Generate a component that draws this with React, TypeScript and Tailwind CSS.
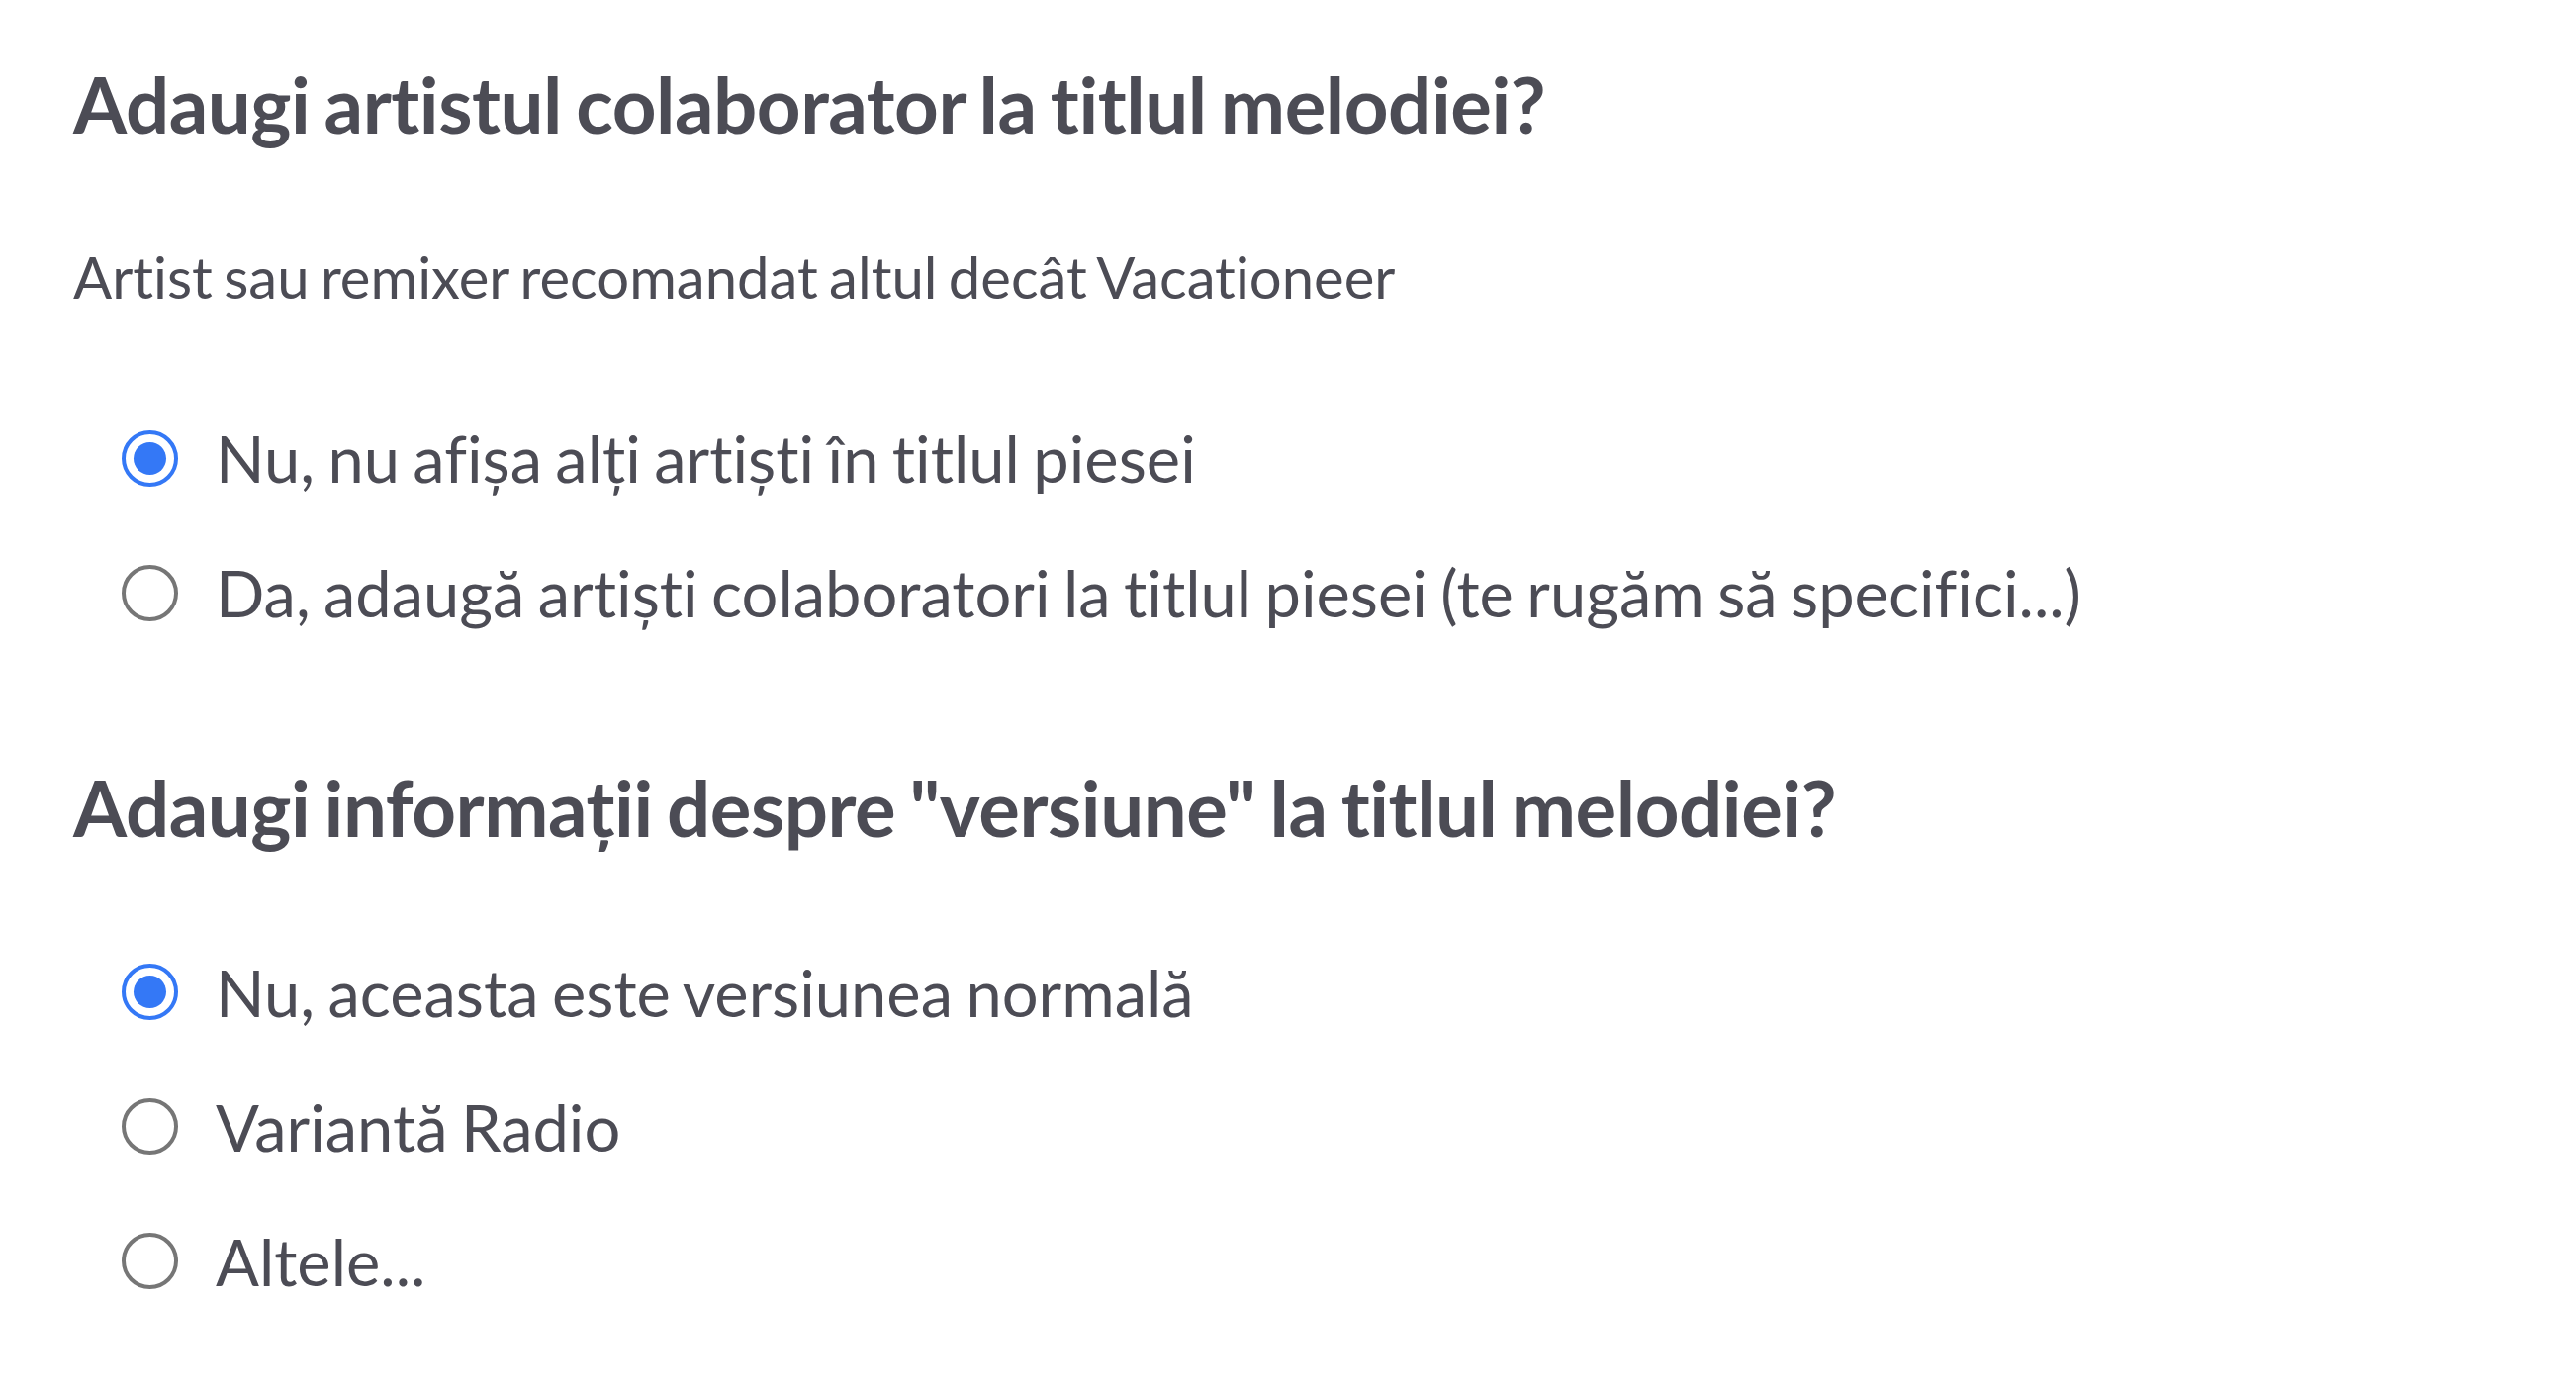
import { useState } from 'react';

interface Option {
    id: string;
    label: string;
}

const collabOptions: Option[] = [
    { id: 'no', label: 'Nu, nu afișa alți artiști în titlul piesei' },
    { id: 'yes', label: 'Da, adaugă artiști colaboratori la titlul piesei (te rugăm să specifici...)' },
];

const versionOptions: Option[] = [
    { id: 'normal', label: 'Nu, aceasta este versiunea normală' },
    { id: 'radio', label: 'Variantă Radio' },
    { id: 'other', label: 'Altele...' },
];

function Radio({ checked }: { checked: boolean }) {
    if (checked) {
        return (
            <span className="flex h-[57px] w-[57px] shrink-0 items-center justify-center rounded-full border-[4px] border-[#3478f6] bg-white">
                <span className="h-[33px] w-[33px] rounded-full bg-[#3478f6]" />
            </span>
        );
    }
    return <span className="h-[57px] w-[57px] shrink-0 rounded-full border-[4px] border-[#767676] bg-white" />;
}

function RadioGroup({
    options,
    value,
    onChange,
}: {
    options: Option[];
    value: string;
    onChange: (id: string) => void;
}) {
    return (
        <div className="flex flex-col gap-[58px] pl-[49px]">
            {options.map((opt) => (
                <label
                    key={opt.id}
                    onClick={() => onChange(opt.id)}
                    className="flex h-[78px] cursor-pointer items-center gap-[38px]"
                >
                    <Radio checked={value === opt.id} />
                    <span className="text-[65px] leading-[1.2] whitespace-nowrap [word-spacing:-0.05em]">
                        {opt.label}
                    </span>
                </label>
            ))}
        </div>
    );
}

export default function App() {
    const [collab, setCollab] = useState('no');
    const [version, setVersion] = useState('normal');

    return (
        <div
            className="min-h-screen bg-white pt-[59px] pl-[74px] text-[#4c4c55] [font-variant-ligatures:none]"
            style={{ fontFamily: 'Lato, "Noto Sans", sans-serif' }}
        >
            <h1 className="text-[78px] leading-[1.2] font-bold tracking-[-0.006em] [word-spacing:-0.055em]">
                Adaugi artistul colaborator la titlul melodiei?
            </h1>
            <p className="mt-[92px] text-[58px] leading-[1.2] [word-spacing:-0.06em]">
                Artist sau remixer recomandat altul decât Vacationeer
            </p>

            <div className="mt-[110px]">
                <RadioGroup options={collabOptions} value={collab} onChange={setCollab} />
            </div>

            <h2 className="mt-[132px] text-[78px] leading-[1.2] font-bold tracking-[-0.006em] [word-spacing:-0.055em]">
                Adaugi informații despre "versiune" la titlul melodiei?
            </h2>

            <div className="mt-[100px]">
                <RadioGroup options={versionOptions} value={version} onChange={setVersion} />
            </div>
        </div>
    );
}
